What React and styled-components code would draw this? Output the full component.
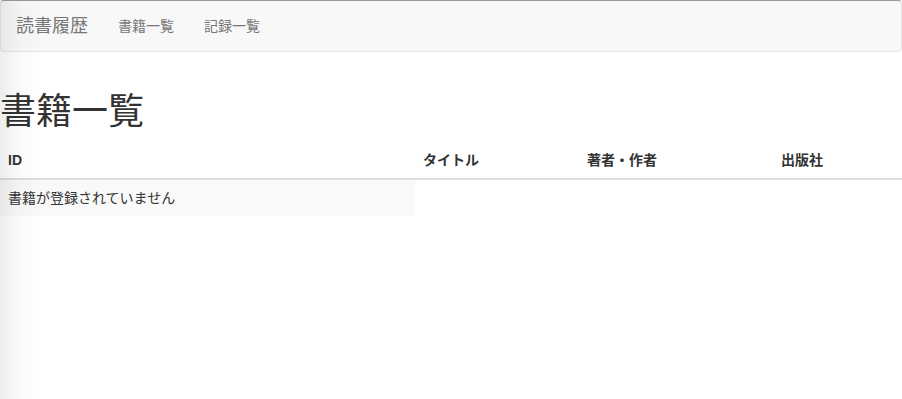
import React from "react";
import styled, { createGlobalStyle } from "styled-components";

const GlobalStyle = createGlobalStyle`
  html, body { margin: 0; padding: 0; background: #fff; }
  body {
    font-family: "Liberation Sans", "Noto Sans CJK JP", sans-serif;
    font-size: 14px;
    line-height: 20px;
    color: #333;
  }
  * { box-sizing: border-box; }
`;

const Page = styled.div`
  position: relative;
  min-height: 399px;
`;

const EdgeShade = styled.div`
  position: absolute;
  inset: 0;
  pointer-events: none;
  background: linear-gradient(to right, rgba(0, 0, 0, 0.07) 0, rgba(0, 0, 0, 0.025) 18px, rgba(0, 0, 0, 0) 42px);
`;

const Navbar = styled.nav`
  display: flex;
  align-items: center;
  height: 52px;
  margin-bottom: 20px;
  background: #f8f8f8;
  border: 1px solid #e7e7e7;
  border-top-color: #9a9a9a;
  border-radius: 4px;
`;

const Brand = styled.a`
  padding: 15px;
  font-size: 18px;
  line-height: 20px;
  color: #777;
  text-decoration: none;
`;

const NavList = styled.ul`
  display: flex;
  list-style: none;
  margin: 0;
  padding: 0;
`;

const NavLink = styled.a`
  display: block;
  padding: 15px;
  font-size: 14px;
  line-height: 20px;
  color: #777;
  text-decoration: none;
`;

const Main = styled.main`
  display: flow-root;
`;

const Title = styled.h1`
  margin: 20px 0 10px;
  font-size: 36px;
  line-height: 1.1;
  font-weight: 400;
  color: #333;
`;

const Table = styled.table`
  width: 100%;
  border-collapse: collapse;
  border-spacing: 0;
`;

const Th = styled.th`
  width: ${(p) => p.$w}px;
  padding: 8px;
  text-align: left;
  font-weight: bold;
  line-height: 20px;
  border-bottom: 2px solid #ddd;
`;

const Td = styled.td`
  padding: 8px;
  line-height: 20px;
  background: ${(p) => (p.$striped ? "#f9f9f9" : "transparent")};
`;

export default function App() {
  return (
    <Page>
      <GlobalStyle />
      <Navbar>
        <Brand href="#">読書履歴</Brand>
        <NavList>
          <li><NavLink href="#">書籍一覧</NavLink></li>
          <li><NavLink href="#">記録一覧</NavLink></li>
        </NavList>
      </Navbar>
      <Main>
        <Title>書籍一覧</Title>
        <Table>
          <thead>
            <tr>
              <Th $w={415}>ID</Th>
              <Th $w={164}>タイトル</Th>
              <Th $w={194}>著者・作者</Th>
              <Th>出版社</Th>
            </tr>
          </thead>
          <tbody>
            <tr>
              <Td $striped>書籍が登録されていません</Td>
              <Td />
              <Td />
              <Td />
            </tr>
          </tbody>
        </Table>
      </Main>
      <EdgeShade />
    </Page>
  );
}
